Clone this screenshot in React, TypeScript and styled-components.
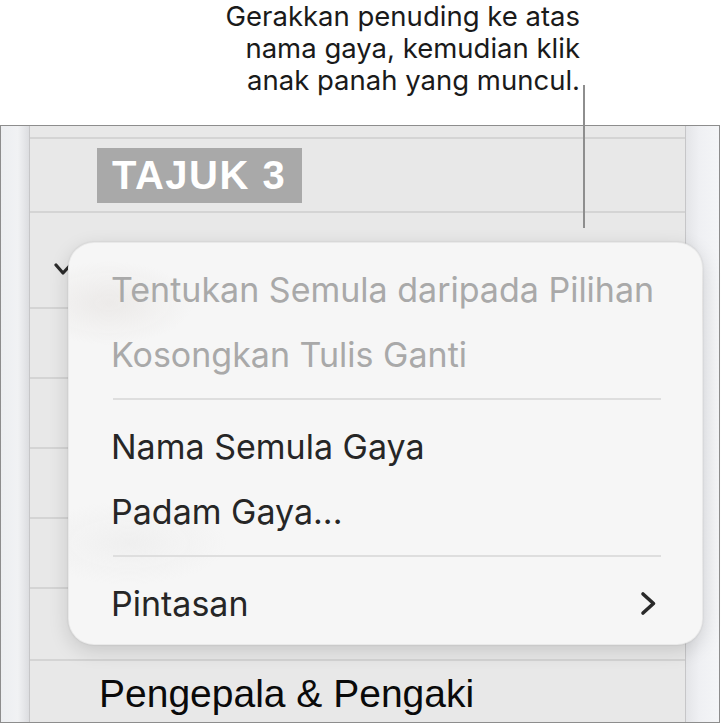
import React from "react";
import styled, { createGlobalStyle } from "styled-components";

const Global = createGlobalStyle`
  html, body { margin: 0; padding: 0; background: #ffffff; }
  #root { width: 721px; height: 726px; }
`;

const Page = styled.div`
  position: relative;
  width: 721px;
  height: 726px;
  background: #ffffff;
  overflow: hidden;
`;

const Callout = styled.p`
  margin: 0;
  height: 125px;
  box-sizing: border-box;
  padding-right: 141px;
  text-align: right;
  font-family: Inter, "Noto Sans", sans-serif;
  font-size: 27.5px;
  line-height: 32px;
  color: #1a1a1a;
`;

const Leader = styled.div`
  position: absolute;
  left: 583px;
  top: 85px;
  width: 2px;
  height: 143px;
  background: #8e8e8e;
  z-index: 1;
`;

const Panel = styled.div`
  display: flex;
  width: 720px;
  height: 598px;
  box-sizing: border-box;
  border: 1px solid #8d8d8d;
  background: #e8e8e8;
`;

const SideStrip = styled.div<{ $side: "left" | "right" }>`
  flex: 0 0 ${(p) => (p.$side === "left" ? "29px" : "34px")};
  box-sizing: border-box;
  ${(p) =>
    p.$side === "left"
      ? `border-right: 1px solid #c6c6c8;
         background: linear-gradient(90deg, #eceef1 0%, #f1f2f4 60%, #dcdde0 100%);`
      : `border-left: 1px solid #c6c6c8;
         background: linear-gradient(90deg, #e4e5e8 0%, #eff0f3 40%, #f4f5f7 100%);`}
`;

const Column = styled.div`
  flex: 1;
  display: flex;
  flex-direction: column;
  background: #e8e8e8;
`;

const Row = styled.div<{ $h?: number }>`
  position: relative;
  box-sizing: border-box;
  display: flex;
  align-items: center;
  ${(p) => (p.$h ? `flex: 0 0 ${p.$h}px;` : "flex: 1;")}
  border-bottom: 2px solid #d4d4d4;
  &:last-child { border-bottom: none; }
`;

const HeadingRow = styled(Row)`
  padding-left: 67px;
`;

const HeadingChip = styled.div`
  display: flex;
  align-items: center;
  height: 55px;
  padding: 0 16px 0 15px;
  background: #a9a9a9;
  color: #ffffff;
  font-family: "Liberation Sans", Arial, sans-serif;
  font-weight: 700;
  font-size: 40px;
  letter-spacing: 1.5px;
`;

const CheckRow = styled(Row)`
  align-items: flex-start;
  padding: 44px 0 0 24px;
`;

const FooterRow = styled(Row)`
  padding: 4px 0 0 69px;
  font-family: "Liberation Sans", Arial, sans-serif;
  font-size: 39px;
  color: #0a0a0a;
`;

const Menu = styled.div`
  position: absolute;
  left: 68px;
  top: 242px;
  width: 635px;
  height: 403px;
  box-sizing: border-box;
  padding: 14px 0 9px;
  border-radius: 26px;
  border: 1px solid rgba(0, 0, 0, 0.05);
  background:
    radial-gradient(ellipse 120px 60px at 40px 60px, rgba(196, 186, 180, 0.2), transparent 70%),
    radial-gradient(ellipse 140px 60px at 60px 300px, rgba(200, 200, 200, 0.14), transparent 70%),
    #f6f6f6;
  box-shadow: 0 6px 20px rgba(0, 0, 0, 0.14), 0 0 2px rgba(0, 0, 0, 0.12);
  font-family: Inter, "Noto Sans", sans-serif;
  font-size: 34px;
  z-index: 2;
`;

const Item = styled.div<{ $disabled?: boolean }>`
  display: flex;
  align-items: center;
  justify-content: space-between;
  height: 65px;
  padding: 0 45px 0 42px;
  color: ${(p) => (p.$disabled ? "#a9a9a9" : "#262626")};
`;

const Separator = styled.div`
  height: 2px;
  margin: 11px 41px 14px 44px;
  background: #dedede;
`;

const Check = () => (
  <svg width="24" height="20" viewBox="0 0 24 20" fill="none">
    <path d="M2 8 L9 16 L22 2" stroke="#2b2b2b" strokeWidth="3.2" strokeLinecap="round" strokeLinejoin="round" />
  </svg>
);

const Chevron = () => (
  <svg width="17" height="25" viewBox="0 0 17 25" fill="none">
    <path d="M3 3 L13.5 12.5 L3 22" stroke="#2a2a2a" strokeWidth="3.6" strokeLinecap="round" strokeLinejoin="round" />
  </svg>
);

export default function App() {
  return (
    <Page>
      <Global />
      <Callout>
        Gerakkan penuding ke atas
        <br />
        nama gaya, kemudian klik
        <br />
        anak panah yang muncul.
      </Callout>
      <Leader />
      <Panel>
        <SideStrip $side="left" />
        <Column>
          <Row $h={13} />
          <HeadingRow $h={74}>
            <HeadingChip>TAJUK 3</HeadingChip>
          </HeadingRow>
          <CheckRow $h={96}>
            <Check />
          </CheckRow>
          <Row $h={70} />
          <Row $h={70} />
          <Row $h={70} />
          <Row $h={70} />
          <Row $h={72} />
          <FooterRow>Pengepala &amp; Pengaki</FooterRow>
        </Column>
        <SideStrip $side="right" />
      </Panel>
      <Menu>
        <Item $disabled>Tentukan Semula daripada Pilihan</Item>
        <Item $disabled>Kosongkan Tulis Ganti</Item>
        <Separator />
        <Item>Nama Semula Gaya</Item>
        <Item>Padam Gaya...</Item>
        <Separator />
        <Item>
          <span>Pintasan</span>
          <Chevron />
        </Item>
      </Menu>
    </Page>
  );
}
